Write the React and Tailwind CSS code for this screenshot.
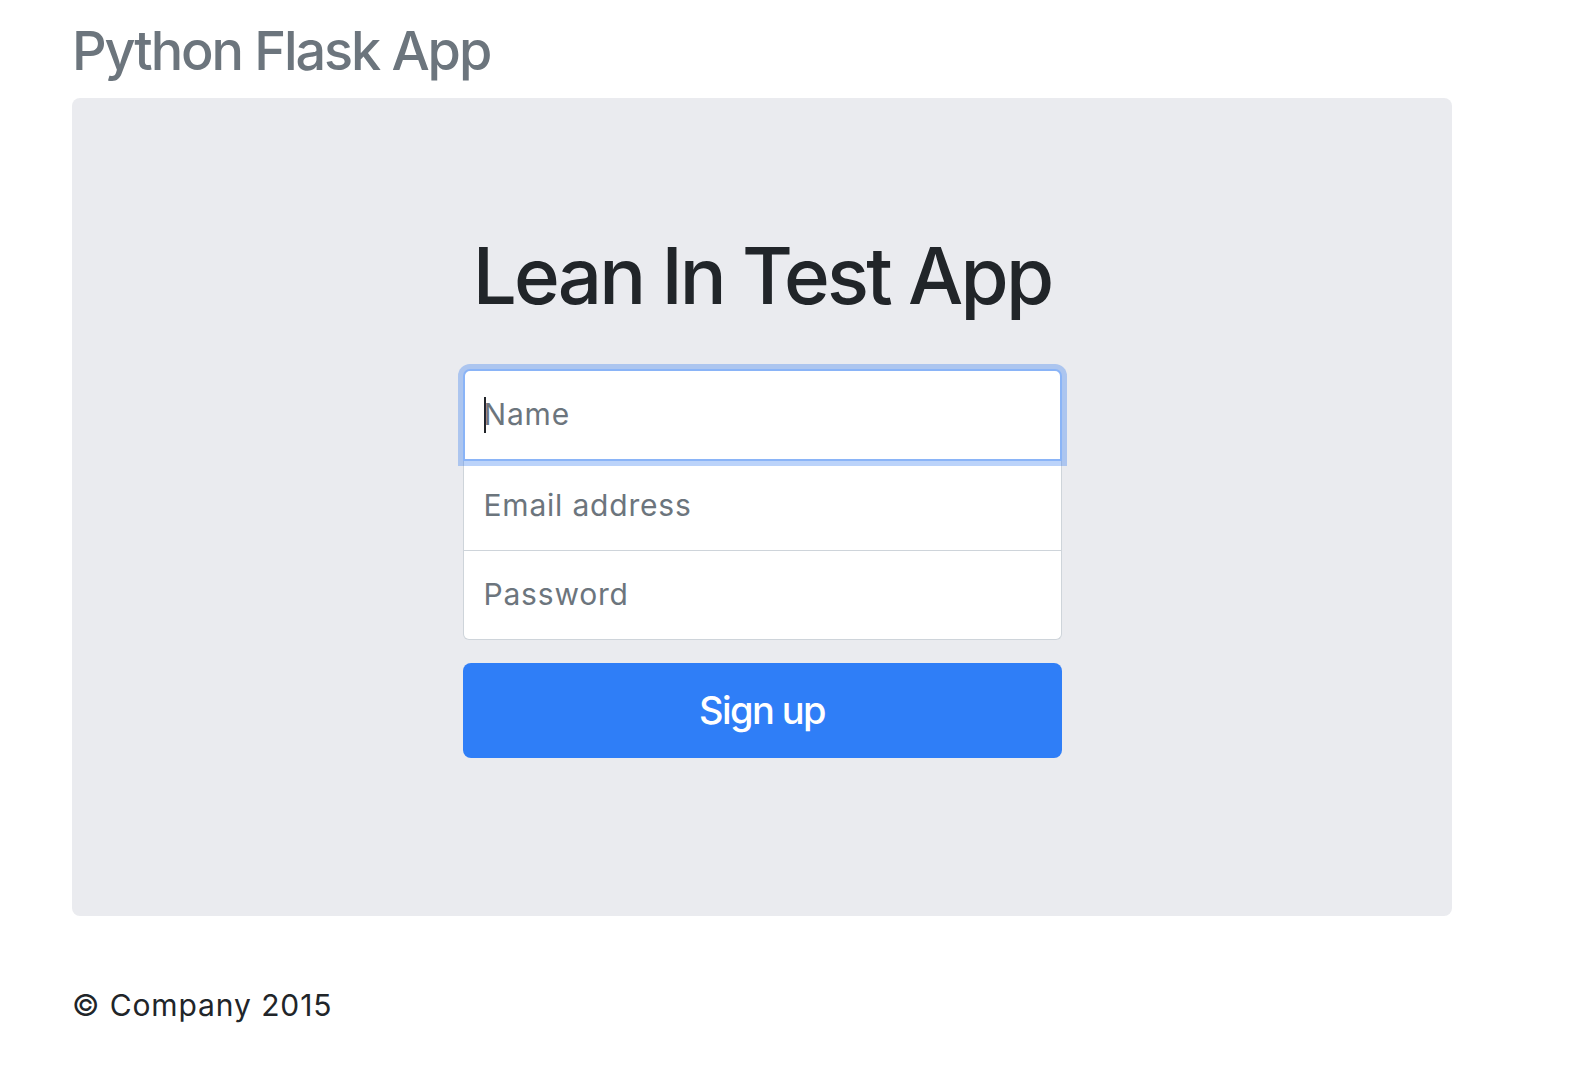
import React from "react";

const App = () => {
    return (
        <div className="min-h-screen w-full bg-white font-['Inter','Liberation_Sans',sans-serif]">
            <div className="pl-[72px] w-[1452px]">
                <header className="h-[98px] pt-[19px]">
                    <h3 className="text-[54px] leading-[1.2] text-[#6c757d] font-medium tracking-[-2.1px]">Python Flask App</h3>
                </header>

                <main className="bg-[#eaebef] rounded-[8px] h-[818px] flex flex-col items-center pt-[131px]">
                    <h1 className="text-[78px] leading-[1.2] text-[#212529] font-medium tracking-[-2.8px]">Lean In Test App</h1>

                    <form className="w-[599px] mt-[46px] flex flex-col" onSubmit={(e) => e.preventDefault()}>
                        <div className="relative h-[92px] bg-white border-2 border-[#8ab4f7] rounded-t-[7px] shadow-[0_0_0_5px_rgba(30,110,240,0.3)] z-10 flex items-center px-[19px] text-[30px] tracking-[0.8px] text-[#6c757d]">
                            <span className="w-[2px] h-[36px] bg-[#212529] mr-[-2px]" />
                            Name
                        </div>
                        <div className="h-[90px] bg-white border-x border-b border-[#ced4da] flex items-center px-[20px] text-[30px] tracking-[0.8px] text-[#6c757d]">
                            Email address
                        </div>
                        <div className="h-[89px] bg-white border-x border-b border-[#ced4da] rounded-b-[6px] flex items-center px-[20px] text-[30px] tracking-[0.8px] text-[#6c757d]">
                            Password
                        </div>
                        <button
                            type="submit"
                            className="mt-[23px] h-[95px] w-full rounded-[8px] bg-[#2f7ef7] text-white text-[38px] font-medium tracking-[-1.6px]"
                        >
                            Sign up
                        </button>
                    </form>
                </main>

                <footer className="pt-[67px]">
                    <p className="text-[30px] leading-[1.5] text-[#212529] tracking-[0.9px]">© Company 2015</p>
                </footer>
            </div>
        </div>
    );
};

export default App;
